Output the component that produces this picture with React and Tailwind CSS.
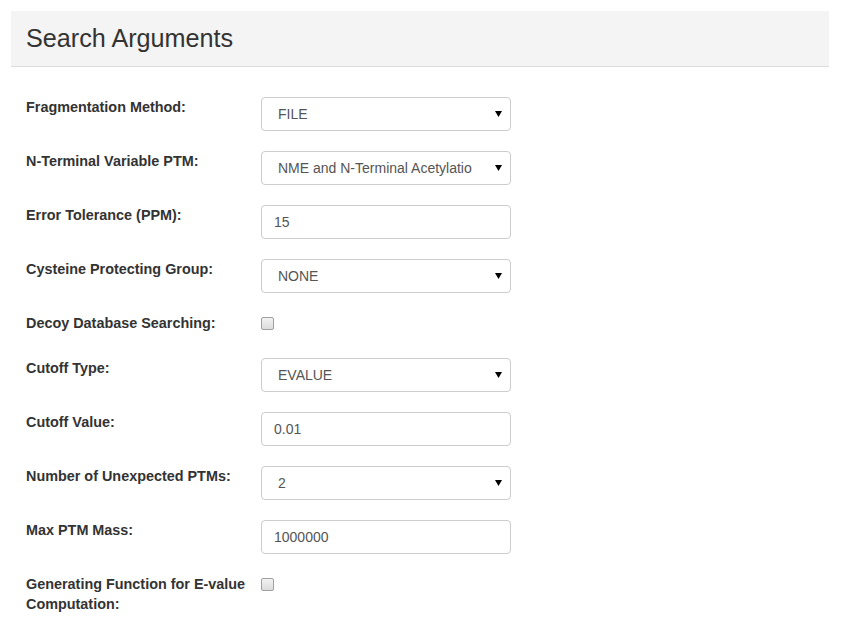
import { useState } from 'react';

const FONT = { fontFamily: '"Liberation Sans", Arial, sans-serif' };

function SelectBox({ value, options }) {
    const [val, setVal] = useState(value);
    return (
        <div className="relative w-[250px] h-[34px]">
            <select
                value={val}
                onChange={(e) => setVal(e.target.value)}
                className="appearance-none w-full h-full border border-[#ccc] rounded-[4px] bg-white pl-[16px] pr-[30px] text-[14px] text-[#555] outline-none"
            >
                {options.map((o) => (
                    <option key={o} value={o}>{o}</option>
                ))}
            </select>
            <svg className="absolute right-[9px] top-[14px] pointer-events-none" width="7" height="6" viewBox="0 0 7 6">
                <path d="M0 0H7L3.5 6Z" fill="#000" />
            </svg>
        </div>
    );
}

function TextBox({ value }) {
    const [val, setVal] = useState(value);
    return (
        <input
            type="text"
            value={val}
            onChange={(e) => setVal(e.target.value)}
            className="w-[250px] h-[34px] border border-[#ccc] rounded-[4px] bg-white px-[12px] text-[14px] text-[#555] outline-none"
        />
    );
}

function Check() {
    const [on, setOn] = useState(false);
    return (
        <button
            type="button"
            onClick={() => setOn(!on)}
            className="mt-[4px] w-[13px] h-[13px] rounded-[2px] border border-[#a0a0a0] bg-gradient-to-b from-[#f2f2f2] to-[#dcdcdc] flex items-center justify-center"
        >
            {on && (
                <svg width="9" height="9" viewBox="0 0 9 9">
                    <path d="M1 4.5L3.5 7L8 1.5" stroke="#333" strokeWidth="1.5" fill="none" />
                </svg>
            )}
        </button>
    );
}

function Row({ label, children, short }) {
    return (
        <div className={`flex ${short ? 'mb-[20px] min-h-[25px]' : 'mb-[20px] h-[34px]'}`}>
            <label className="w-[235px] pr-[12px] text-[14.4px] leading-[20px] font-bold text-[#333]">{label}</label>
            <div>{children}</div>
        </div>
    );
}

export default function App() {
    return (
        <div className="min-h-screen bg-white pt-[11px]" style={FONT}>
            <div className="ml-[11px] w-[818px]">
                <div className="h-[56px] bg-[#f4f4f4] border-b border-[#dddddd] pl-[15px] pt-[13px]">
                    <h3 className="text-[25.2px] leading-[28px] text-[#333]">Search Arguments</h3>
                </div>

                <form className="pl-[15px] pt-[30px]">
                    <Row label="Fragmentation Method:">
                        <SelectBox value="FILE" options={['FILE', 'CID', 'ETD', 'HCD']} />
                    </Row>
                    <Row label="N-Terminal Variable PTM:">
                        <SelectBox value="NME and N-Terminal Acetylatio" options={['NME and N-Terminal Acetylatio', 'NONE']} />
                    </Row>
                    <Row label="Error Tolerance (PPM):">
                        <TextBox value="15" />
                    </Row>
                    <Row label="Cysteine Protecting Group:">
                        <SelectBox value="NONE" options={['NONE', 'C57', 'C58']} />
                    </Row>
                    <Row label="Decoy Database Searching:" short>
                        <Check />
                    </Row>
                    <Row label="Cutoff Type:">
                        <SelectBox value="EVALUE" options={['EVALUE', 'FDR']} />
                    </Row>
                    <Row label="Cutoff Value:">
                        <TextBox value="0.01" />
                    </Row>
                    <Row label="Number of Unexpected PTMs:">
                        <SelectBox value="2" options={['0', '1', '2']} />
                    </Row>
                    <Row label="Max PTM Mass:">
                        <TextBox value="1000000" />
                    </Row>
                    <Row label="Generating Function for E-value Computation:" short>
                        <Check />
                    </Row>
                </form>
            </div>
        </div>
    );
}
